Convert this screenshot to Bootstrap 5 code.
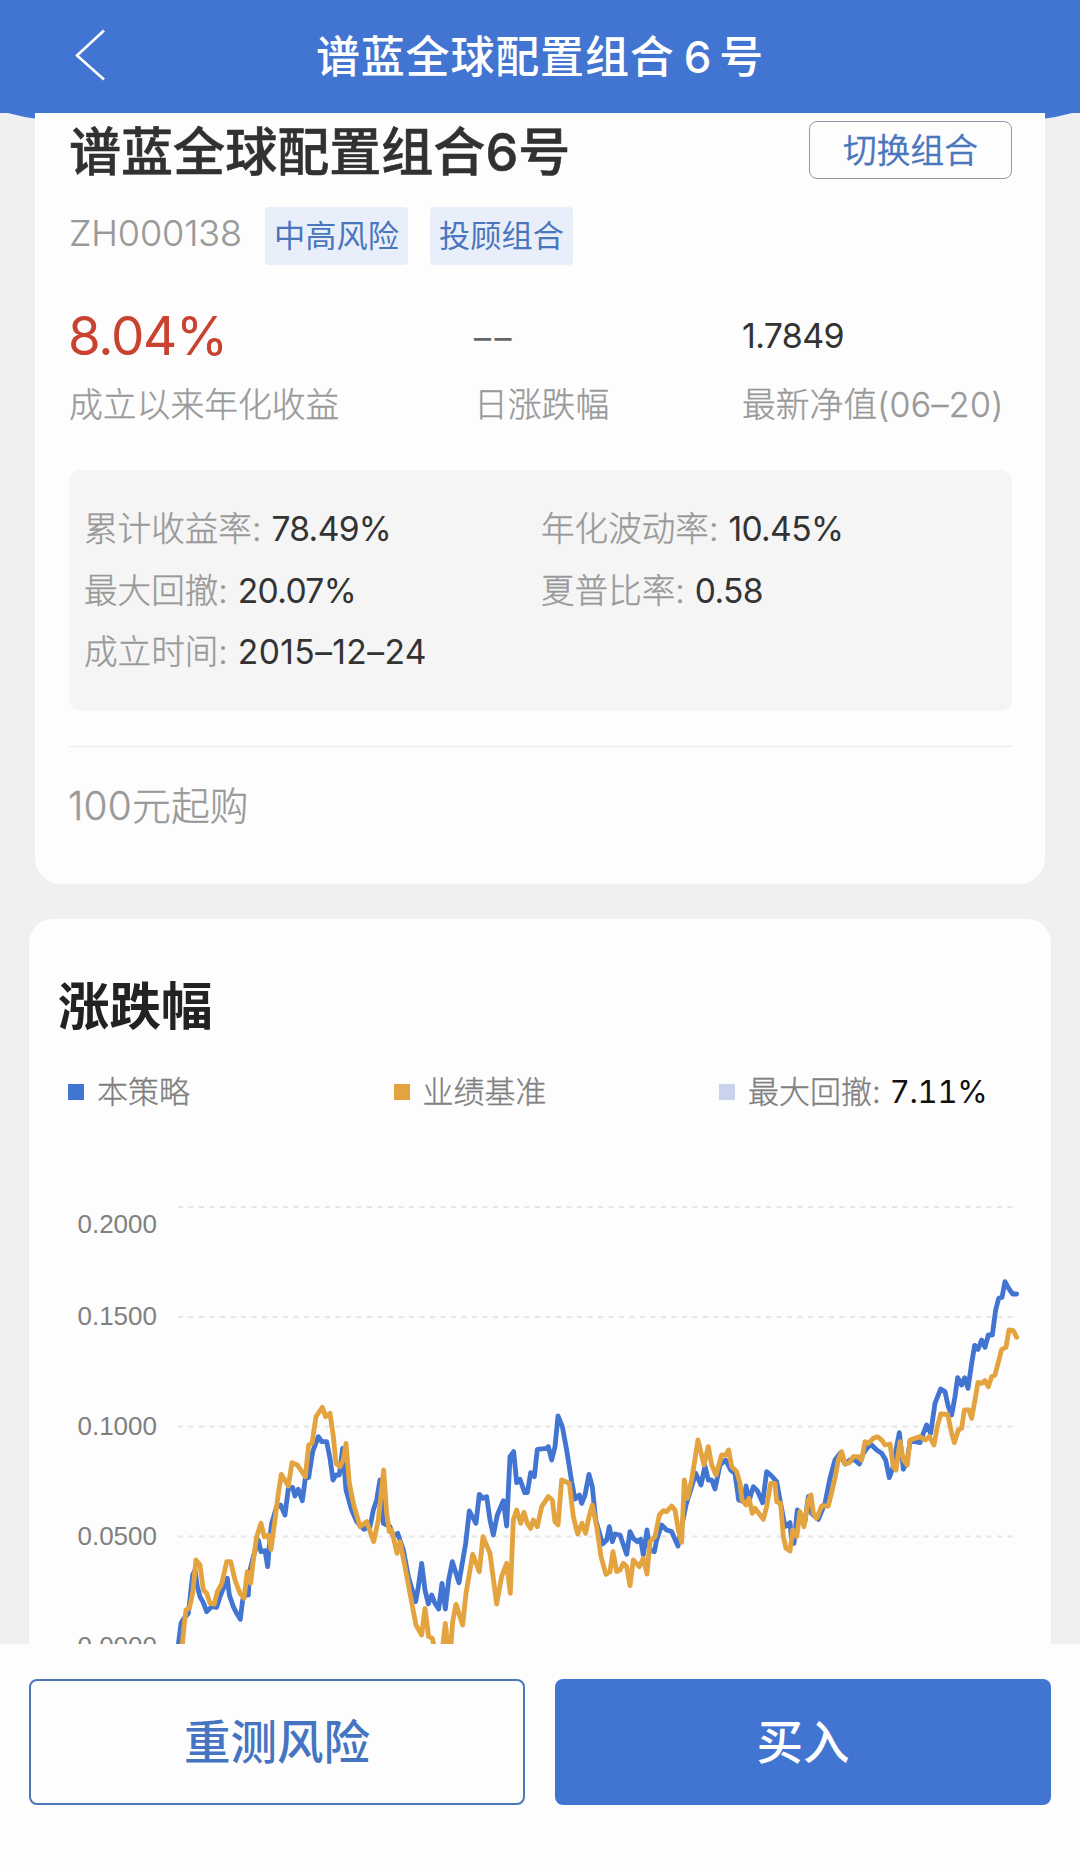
<!DOCTYPE html>
<html lang="zh-CN">
<head>
<meta charset="utf-8">
<meta name="viewport" content="width=device-width, initial-scale=1">
<title>谱蓝全球配置组合6号</title>
<link href="https://cdn.jsdelivr.net/npm/bootstrap@5.3.0/dist/css/bootstrap.min.css" rel="stylesheet">
<style>
  body { background:#f0f0f0; font-family:Inter,"Noto Sans CJK SC",sans-serif; color:#333; height:1866px; overflow:hidden; }
  .topbar { height:113px; background:#4275d1; }
  .topbar h1 { font-size:44px; font-weight:500; letter-spacing:.85px; line-height:60px; }
  .topbar h1 span { margin:0 7px 0 9px; }
  .back-link { left:72px; top:28px; }
  .curve { height:6px; z-index:0; top:113px; }
  .fund-card { width:1010px; height:771px; border-radius:0 0 26px 26px; padding:0 33px 0 34px; background:#fdfdfd; z-index:1; }
  .fund-name { font-size:52px; font-weight:500; line-height:60px; letter-spacing:.05px; color:#303133; -webkit-text-stroke:.6px currentColor; padding-top:2px; }
  .title-row { padding-top:8px; height:66px; }
  .btn-switch { width:203px; height:58px; border:1.5px solid #929aa8; border-radius:8px; font-size:33.7px; line-height:1; color:#4a76bd; font-weight:350; padding:1px 0 0; }
  .btn-switch, .stat-lbl, .dl, .min-buy, .legend-row { -webkit-text-stroke:.35px currentColor; }
  .code-row { margin-top:28px; height:58px; }
  .fund-code { width:196px; font-size:36px; font-weight:300; color:#999; letter-spacing:-.1px; padding-bottom:7px; -webkit-text-stroke:.2px currentColor; }
  .risk-tag { width:143px; height:58px; background:#e9effa; color:#4a76bd; font-size:31.2px; font-weight:400; border-radius:4px; margin-right:22px; }
  .stats { margin-top:38px; }
  .stat-num { height:66px; line-height:66px; font-size:34px; font-weight:400; letter-spacing:-.7px; }
  .stat-lbl { font-size:33.8px; line-height:48px; color:#999; font-weight:300; margin-top:12px; white-space:nowrap; }
  .stat-lbl span { letter-spacing:.45px; }
  .stat-a { width:405px; } .stat-b { width:268px; }
  .stat-a .stat-num { font-size:53px; color:#c9412f; letter-spacing:-1.3px; margin-left:-1px; }
  .stat-b .stat-num { letter-spacing:3.5px; padding-top:2px; color:#666; }
  .detail-box { background:#f5f5f5; border-radius:12px; height:241px; margin-top:41px; padding:28px 15px; font-size:33.6px; line-height:61.5px; }
  .detail-box .row { --bs-gutter-x:0; }
  .detail-box .first { width:457px; }
  .dl { color:#999; font-weight:300; } .dv { letter-spacing:-.65px; margin-left:10px; }
  .dv-date { letter-spacing:.4px; }
  .rule { border-top:1.5px solid #ebebeb; margin-top:35px; }
  .min-buy { font-size:38.8px; line-height:60px; color:#999; font-weight:300; margin-top:29px; margin-left:-1px; }
  .min-buy span { letter-spacing:.3px; }
  .chart-card { width:1022px; height:725px; margin-top:35px; border-radius:24px 24px 0 0; background:#fdfdfd; }
  .chart-title { font-size:51.5px; line-height:60px; font-weight:700; color:#222; padding:57px 0 0 29px; }
  .legend-row { padding:32px 0 0 39px; font-size:31px; line-height:48px; color:#808080; font-weight:300; }
  .legend-row > div { width:325.5px; white-space:nowrap; }
  .swatch { width:16px; height:16px; margin-right:13px; }
  .s-blue { background:#4275d1; } .s-gold { background:#e3a33f; } .s-pale { background:#c9d4ec; }
  .max-val { color:#111; font-weight:400; margin-left:9px; font-feature-settings:"tnum"; letter-spacing:-.3px; -webkit-text-stroke:0; }
  .chart { display:block; margin-top:54px; }
  .axis-t { font-family:"Liberation Sans",Arial,sans-serif; font-size:26px; fill:#808080; }
  .grid-l { stroke:#e5e5e5; stroke-width:2; stroke-dasharray:5 5.5; }
  .series { fill:none; stroke-width:14.5; stroke-linejoin:round; stroke-linecap:round; }
  .actions { height:222px; background:#fdfdfd; padding:35px 29px 0; gap:30px; }
  .actions .btn { height:126px; width:496px; border-radius:8px; font-size:46.5px; font-weight:500; padding:1px 0 0; }
  .btn-retest, .btn-retest:hover { border:2.5px solid #4c78b8; color:#4575c2; }
  .btn-buy, .btn-buy:hover { background:#4275d1; color:#fff; }
</style>
</head>
<body>
<header class="topbar position-relative d-flex align-items-center justify-content-center text-white">
  <a href="#" class="back-link position-absolute" aria-label="返回">
    <svg class="d-block" width="38" height="54" viewBox="0 0 38 54" fill="none" stroke="#fff" stroke-width="2.6"><path d="M32 2.500 5 27.500 32 51.500"/></svg>
  </a>
  <h1 class="m-0">谱蓝全球配置组合<span>6</span>号</h1>
</header>
<svg class="curve position-absolute start-0 w-100" viewBox="0 0 1080 6" preserveAspectRatio="none"><path d="M8 0Q22 4 38 6H1042Q1058 4 1072 0Z" fill="#4275d1"/></svg>

<main>
  <section class="fund-card position-relative mx-auto">
    <div class="title-row d-flex justify-content-between">
      <h2 class="fund-name m-0">谱蓝全球配置组合6号</h2>
      <button class="btn btn-switch">切换组合</button>
    </div>
    <div class="code-row d-flex align-items-center">
      <span class="fund-code">ZH000138</span>
      <span class="risk-tag d-flex align-items-center justify-content-center">中高风险</span>
      <span class="risk-tag d-flex align-items-center justify-content-center">投顾组合</span>
    </div>
    <div class="stats d-flex">
      <div class="stat-a"><div class="stat-num">8.04%</div><div class="stat-lbl">成立以来年化收益</div></div>
      <div class="stat-b"><div class="stat-num">––</div><div class="stat-lbl">日涨跌幅</div></div>
      <div><div class="stat-num">1.7849</div><div class="stat-lbl">最新净值<span>(06–20)</span></div></div>
    </div>
    <div class="detail-box">
      <div class="row"><div class="col-auto first"><span class="dl">累计收益率:</span><span class="dv">78.49%</span></div><div class="col"><span class="dl">年化波动率:</span><span class="dv">10.45%</span></div></div>
      <div class="row"><div class="col-auto first"><span class="dl">最大回撤:</span><span class="dv">20.07%</span></div><div class="col"><span class="dl">夏普比率:</span><span class="dv">0.58</span></div></div>
      <div class="row"><div class="col"><span class="dl">成立时间:</span><span class="dv dv-date">2015–12–24</span></div></div>
    </div>
    <div class="rule"></div>
    <div class="min-buy"><span>100</span>元起购</div>
  </section>

  <section class="chart-card mx-auto overflow-hidden">
    <h2 class="chart-title m-0">涨跌幅</h2>
    <div class="legend-row d-flex">
      <div class="d-flex align-items-center"><i class="swatch s-blue"></i>本策略</div>
      <div class="d-flex align-items-center"><i class="swatch s-gold"></i>业绩基准</div>
      <div class="d-flex align-items-center"><i class="swatch s-pale"></i>最大回撤:<span class="max-val">7.11%</span></div>
    </div>
    <svg class="chart" width="1022" height="474" viewBox="29 1170 1022 474">
      <g class="grid-l"><path d="M178 1207H1017M178 1317H1017M178 1426.500H1017M178 1536.500H1017"/></g>
      <g class="axis-t" text-anchor="end">
        <text x="157" y="1233">0.2000</text><text x="157" y="1325">0.1500</text><text x="157" y="1435">0.1000</text><text x="157" y="1545">0.0500</text><text x="157" y="1655">0.0000</text>
      </g>
      <g transform="translate(0 1380) scale(.33333)">
        <polyline id="strategy" class="series" stroke="#4275d1"/>
        <polyline id="benchmark" class="series" stroke="#e3a33f"/>
      </g>
    </svg>
  </section>
</main>

<footer class="actions d-flex">
  <button class="btn btn-retest">重测风险</button>
  <button class="btn btn-buy">买入</button>
</footer>

<script src="https://cdn.jsdelivr.net/npm/bootstrap@5.3.0/dist/js/bootstrap.bundle.min.js"></script>
<script>
// Each series is stored by period: [x offset, y offset, points]
const series = {
  strategy: [
    [480,0,"55,795 63,730 72,715 85,700 98,585 105,570 112,620 120,650 130,668 140,695 155,680 170,682 180,650 190,625 202,595 208,645 220,680 230,700 241,718 248,660 258,640 265,645 268,580 280,530 295,480 303,515 315,512 323,560 330,470 335,430 350,380 362,375 375,405 385,325 398,322 405,348 415,328 427,362 436,295 446,292 458,215 475,170 485,185 500,185 510,235 519,300 528,285 538,285 548,205 558,330 575,390 590,425 612,448 630,440 640,390 650,360 660,300 670,430 690,440 700,470 713,460 730,510 745,590"],
    [1200,0,"47,665 55,620 65,550 75,630 85,672 95,645 105,670 116,687 126,610 136,687 146,600 157,545 177,608 197,490 208,393 228,430 238,343 248,355 260,350 270,420 280,465 292,405 310,362 320,438 330,230 341,215 350,308 360,298 374,338 382,338 392,278 403,290 412,208 440,205 445,200 455,240 465,200 474,108 487,140 500,210 515,305 525,357 538,345 545,370 555,345 567,283 577,320 587,420 608,492 620,480 628,440 637,485 645,462 660,465 680,523 690,455 700,475 712,485 722,478 730,525 741,450 750,510 763,515 770,480"],
    [1920,0,"65,435 80,450 95,455 114,498 125,440 138,375 155,320 167,280 183,315 195,258 205,300 215,300 225,327 240,255 257,240 272,270 285,280 296,360 312,365 318,318 328,360 340,320 352,332 368,368 380,275 392,285 410,305 420,360 435,440 450,428 455,480 462,490 472,390 485,410 495,425 505,350 515,400 535,418 555,370"],
    [2460,-360,"30,655 45,600 60,580 75,612 90,600 105,600 118,612 130,580 145,560 155,555 170,570 185,580 197,600 208,653 218,625 228,570 238,518 250,628 262,600 270,545 285,545 300,548 310,520 320,495 332,520 345,430 362,387 375,395 385,440 395,465 405,410 413,353 425,375 434,353 444,385 455,310 464,256 474,268 485,240 495,262 505,225 517,225 527,150 536,115 546,112 555,65 566,85 578,102 590,102"]
  ],
  benchmark: [
    [480,0,"67,795 72,740 78,690 88,685 98,640 108,540 120,555 130,630 140,640 150,670 163,672 172,635 185,612 200,545 212,545 225,600 240,640 252,655 262,575 272,610 280,540 290,470 303,430 313,470 325,465 333,508 345,420 355,340 364,283 385,318 396,248 412,255 436,290 446,195 456,190 468,110 487,82 497,110 510,100 520,170 528,250 540,260 550,240 558,190 568,310 580,370 600,440 620,425 641,485 655,420 671,270 680,400 688,455 695,450 711,520 720,485 735,560 750,640 768,735 785,765 795,685 806,770 817,775 825,810"],
    [1200,0,"127,810 136,730 145,810 153,795 158,725 168,673 188,735 198,640 218,523 238,575 249,470 270,520 290,672 305,590 320,550 331,640 340,420 350,390 362,430 372,397 382,430 392,445 400,420 412,440 425,380 445,350 457,360 465,425 474,435 485,300 508,310 520,410 533,462 546,430 557,460 567,410 577,375 590,440 603,530 618,583 630,575 639,515 650,575 660,570 670,550 680,560 690,617 700,540 718,560 730,535 741,582 750,485 765,470 778,405 790,392 800,395 815,378 825,390 835,450 845,487 853,300 862,355 875,300"],
    [1920,0,"174,180 192,255 205,200 215,255 228,285 245,225 257,225 266,210 275,260 290,275 300,310 306,360 318,375 327,355 337,400 345,385 370,418 380,380 392,310 405,310 410,365 422,370 430,470 438,505 450,513 458,450 470,470 480,395 492,440 505,360 513,345 520,400 530,415 545,378 565,378"],
    [2460,-360,"45,655 55,600 65,575 75,612 88,608 100,590 115,590 125,600 135,545 145,550 160,535 172,530 185,540 195,555 210,552 220,620 228,630 240,545 250,600 262,615 270,540 285,535 300,530 315,540 328,530 342,555 352,500 362,462 383,463 395,520 403,548 415,510 425,505 433,450 447,450 455,475 465,420 474,367 485,370 495,362 505,380 515,350 525,345 545,268 558,262 567,210 580,212 590,232"]
  ]
};
for (const [id, periods] of Object.entries(series)) {
  const points = periods.flatMap(([dx, dy, text]) => text.split(" ").map(p => {
    const [x, y] = p.split(",").map(Number);
    return (x + dx) + "," + (y + dy);
  }));
  document.getElementById(id).setAttribute("points", points.join(" "));
}
</script>
</body>
</html>
